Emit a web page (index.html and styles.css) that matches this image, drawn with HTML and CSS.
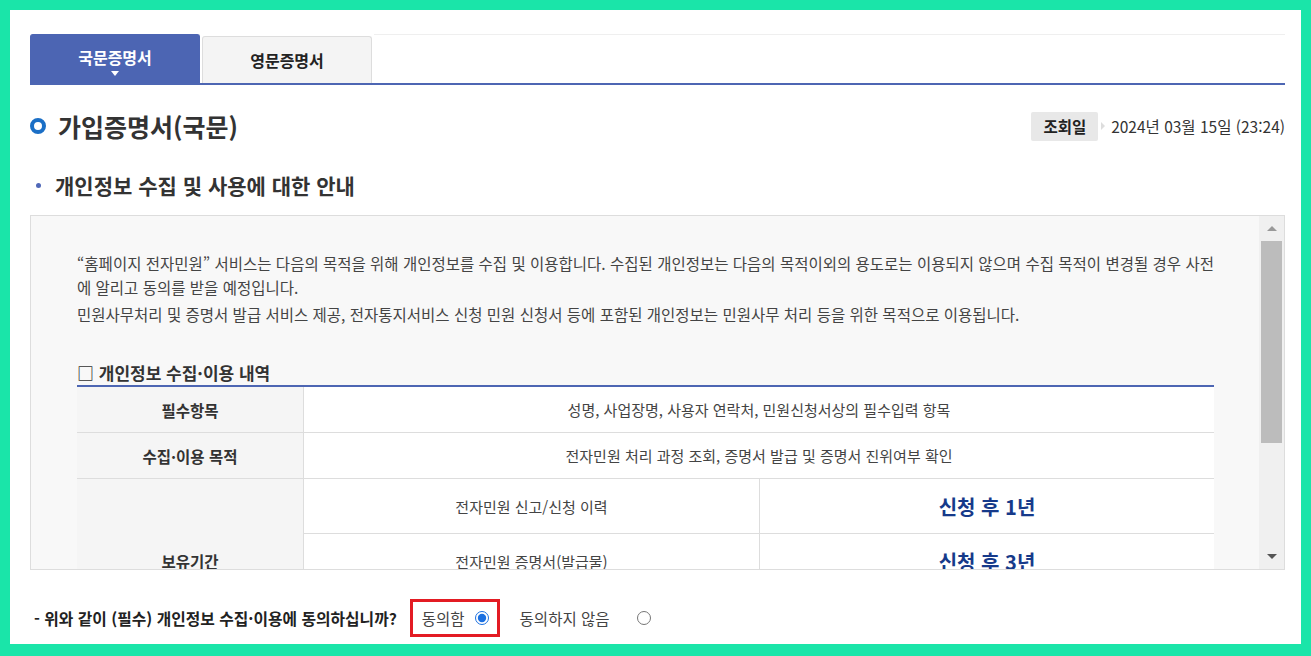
FILE: index.html
```html
<!DOCTYPE html>
<html lang="ko">
<head>
    <meta charset="UTF-8">
    <meta name="viewport" content="width=device-width, initial-scale=1.0">
    <title>가입증명서(국문)</title>
    <link rel="stylesheet" href="styles.css">
</head>
<body>
    <div class="frame">
        <div class="tabs">
            <a class="tab active" href="#">국문증명서</a>
            <a class="tab" href="#">영문증명서</a>
            <div class="tab-fill"></div>
        </div>

        <div class="title-row">
            <h2 class="title"><span class="ring"></span>가입증명서(국문)</h2>
            <div class="date">
                <span class="date-label">조회일</span>
                <span class="date-arrow"></span>
                <span class="date-value">2024년 03월 15일 (23:24)</span>
            </div>
        </div>

        <h3 class="sub"><span class="dot"></span>개인정보 수집 및 사용에 대한 안내</h3>

        <div class="scroll-box">
            <div class="scroll-content">
                <p class="intro">“홈페이지 전자민원” 서비스는 다음의 목적을 위해 개인정보를 수집 및 이용합니다. 수집된 개인정보는 다음의 목적이외의 용도로는 이용되지 않으며 수집 목적이 변경될 경우 사전에 알리고 동의를 받을 예정입니다.</p>
                <p class="intro second">민원사무처리 및 증명서 발급 서비스 제공, 전자통지서비스 신청 민원 신청서 등에 포함된 개인정보는 민원사무 처리 등을 위한 목적으로 이용됩니다.</p>

                <h4 class="tbl-title">□ 개인정보 수집·이용 내역</h4>
                <table class="info-table">
                    <tr>
                        <th>필수항목</th>
                        <td colspan="2">성명, 사업장명, 사용자 연락처, 민원신청서상의 필수입력 항목</td>
                    </tr>
                    <tr>
                        <th>수집·이용 목적</th>
                        <td colspan="2">전자민원 처리 과정 조회, 증명서 발급 및 증명서 진위여부 확인</td>
                    </tr>
                    <tr class="tall">
                        <th rowspan="3">보유기간</th>
                        <td>전자민원 신고/신청 이력</td>
                        <td class="period">신청 후 1년</td>
                    </tr>
                    <tr class="tall">
                        <td>전자민원 증명서(발급물)</td>
                        <td class="period">신청 후 3년</td>
                    </tr>
                    <tr class="tall">
                        <td>홈페이지 회원정보</td>
                        <td class="period">회원 탈퇴 시까지</td>
                    </tr>
                </table>
            </div>
            <div class="scrollbar">
                <span class="sb-up"></span>
                <div class="sb-track"><div class="sb-thumb"></div></div>
                <span class="sb-down"></span>
            </div>
        </div>

        <div class="agree">
            <span class="agree-q">- 위와 같이 (필수) 개인정보 수집·이용에 동의하십니까?</span>
            <label class="agree-opt selected"><span>동의함</span><input type="radio" name="agree" checked></label>
            <label class="agree-opt"><span>동의하지 않음</span><input type="radio" name="agree"></label>
        </div>
    </div>
</body>
</html>
```

FILE: styles.css
```css
body {
    margin: 0;
    background-color: #1ae5a9;
    font-family: "Noto Sans CJK KR", "Noto Sans", sans-serif;
    color: #333;
}

.frame {
    margin: 10px 10px 12px 10px;
    height: 634px;
    background-color: #fff;
    padding: 24px 16px 0 20px;
    box-sizing: border-box;
}

/* tabs */
.tabs {
    display: flex;
    align-items: flex-end;
    border-bottom: 2px solid #4d66b3;
    height: 49px;
}

.tab {
    width: 170px;
    height: 47px;
    box-sizing: border-box;
    display: flex;
    align-items: center;
    justify-content: center;
    font-size: 16px;
    font-weight: bold;
    color: #222;
    text-decoration: none;
    background-color: #f4f4f4;
    border: 1px solid #ddd;
    border-bottom: none;
    border-radius: 3px 3px 0 0;
    margin-right: 2px;
    padding-bottom: 1px;
}

.tab.active {
    height: 49px;
    background-color: #4c65b3;
    border-color: #4c65b3;
    color: #fff;
    position: relative;
    padding-bottom: 4px;
}

.tab.active::after {
    content: "";
    position: absolute;
    left: 50%;
    bottom: 7px;
    margin-left: -4px;
    border-left: 4px solid transparent;
    border-right: 4px solid transparent;
    border-top: 5px solid #fff;
}

.tab-fill {
    flex: 1;
    align-self: flex-start;
    border-top: 1px solid #efefef;
}

/* title */
.title-row {
    display: flex;
    justify-content: space-between;
    align-items: center;
    margin-top: 26px;
    height: 30px;
}

.title {
    margin: 0;
    font-size: 25px;
    font-weight: bold;
    color: #333;
    display: flex;
    align-items: center;
}

.ring {
    width: 16px;
    height: 16px;
    border: 4px solid #1b6fc6;
    border-radius: 50%;
    box-sizing: border-box;
    margin-right: 12px;
}

.date {
    display: flex;
    align-items: center;
    font-size: 15.5px;
}

.date-label {
    background-color: #e8e8e8;
    font-weight: bold;
    color: #222;
    height: 29px;
    line-height: 29px;
    padding: 0 12px;
    border-radius: 2px;
}

.date-arrow {
    margin: 0 6px 0 3px;
    border-top: 4px solid transparent;
    border-bottom: 4px solid transparent;
    border-left: 4px solid #ddd;
}

.date-value {
    color: #333;
}

/* sub heading */
.sub {
    margin: 30px 0 0 0;
    font-size: 21px;
    font-weight: bold;
    color: #333;
    display: flex;
    align-items: center;
    height: 28px;
}

.dot {
    width: 5px;
    height: 5px;
    background-color: #5068b8;
    border-radius: 50%;
    margin: 0 14px 0 6px;
}

/* scroll box */
.scroll-box {
    margin-top: 16px;
    height: 355px;
    border: 1px solid #ddd;
    border-right: none;
    background-color: #f8f8f8;
    display: flex;
    overflow: hidden;
    box-sizing: border-box;
}

.scroll-content {
    flex: 1;
    overflow: hidden;
    padding: 35px 45px 0 46px;
}

.intro {
    margin: 0 -8px 0 0;
    font-size: 15.5px;
    line-height: 24px;
    color: #444;
}

.intro.second {
    margin-top: 3px;
}

.tbl-title {
    margin: 36px 0 1px 0;
    font-size: 17px;
    font-weight: bold;
    color: #333;
    line-height: 22px;
}

.info-table {
    width: 100%;
    border-collapse: collapse;
    border-top: 2px solid #4d66b3;
    font-size: 15px;
    color: #444;
}

.info-table th,
.info-table td {
    border: 1px solid #ddd;
    height: 45px;
    text-align: center;
    padding: 0;
}

.info-table th {
    width: 226px;
    background-color: #f5f5f5;
    font-weight: bold;
    font-size: 15.5px;
    color: #333;
    border-left: none;
}

.info-table td {
    background-color: #fff;
    border-right: none;
}

.info-table td:not(.period) {
    width: 455px;
}

.info-table tr.tall td {
    height: 54px;
}

.info-table .period {
    font-size: 20px;
    font-weight: bold;
    color: #163a8a;
}

/* fake scrollbar */
.scrollbar {
    width: 25px;
    background-color: #f0f0f0;
    border-right: 1px solid #ddd;
    display: flex;
    flex-direction: column;
    align-items: center;
}

.sb-up,
.sb-down {
    height: 25px;
    display: flex;
    align-items: center;
}

.sb-up::before {
    content: "";
    border-left: 5px solid transparent;
    border-right: 5px solid transparent;
    border-bottom: 5px solid #999;
}

.sb-down::before {
    content: "";
    border-left: 5px solid transparent;
    border-right: 5px solid transparent;
    border-top: 5px solid #555;
}

.sb-track {
    flex: 1;
    width: 100%;
    padding: 0 2px;
    box-sizing: border-box;
}

.sb-thumb {
    height: 202px;
    background-color: #bcbcbc;
}

/* agree */
.agree {
    display: flex;
    align-items: center;
    margin-top: 29px;
    font-size: 15.5px;
    padding-left: 4px;
}

.agree-q {
    font-weight: bold;
    font-size: 15.8px;
    color: #222;
    margin-right: 13px;
}

.agree-opt {
    display: flex;
    align-items: center;
    color: #444;
    height: 38px;
    box-sizing: border-box;
    padding: 0 8px 0 9px;
    border: 3px solid transparent;
}

.agree-opt.selected {
    border-color: #e31b23;
    margin-right: 8px;
}

.agree-opt input {
    margin: 0 0 0 27px;
    width: 14px;
    height: 14px;
    accent-color: #1a6fe0;
}

.agree-opt.selected input {
    margin-left: 10px;
}
```
